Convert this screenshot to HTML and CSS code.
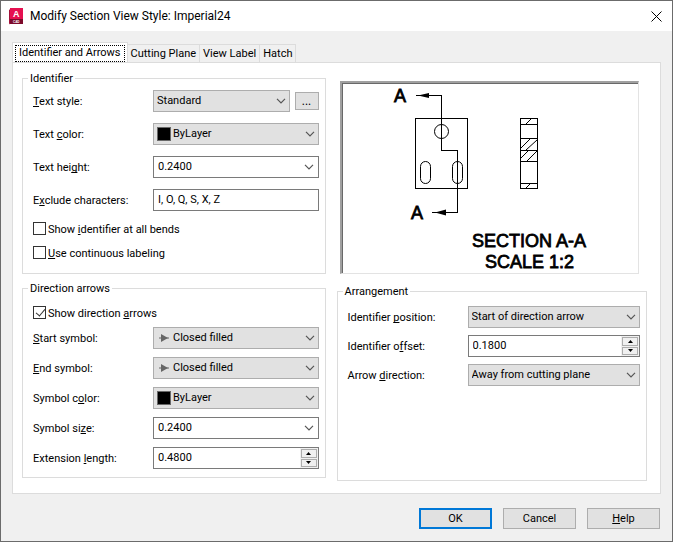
FILE: index.html
```
<!DOCTYPE html>
<html lang="en">
<head>
<meta charset="utf-8">
<meta name="viewport" content="width=device-width, initial-scale=1.0">
<title>Modify Section View Style: Imperial24</title>
<link rel="stylesheet" href="styles.css">
</head>
<body>
<svg class="defs" width="0" height="0" aria-hidden="true">
  <symbol id="chevron" viewBox="0 0 10 6"><path d="M1 .8l4 4 4-4" fill="none" stroke="#555" stroke-width="1.2"/></symbol>
  <symbol id="arrow" viewBox="0 0 10 8"><path d="M0 4h10" stroke="#666"/><path d="M2 0l7 4-7 4z" fill="#666"/></symbol>
  <symbol id="up" viewBox="0 0 5 3"><path d="M0 3l2.5-3L5 3z"/></symbol>
  <symbol id="down" viewBox="0 0 5 3"><path d="M0 0l2.5 3L5 0z"/></symbol>
</svg>

<form class="dialog">
  <header class="titlebar">
    <svg class="logo" viewBox="0 0 15 17" aria-hidden="true">
      <path d="M0 2l2-1.500v14l-2 2z" fill="#a3123a"/>
      <path d="M1 0h13v11H1z" fill="#e51050"/>
      <path d="M1 11h13v5H1z" fill="#7d0a2b"/>
      <text x="4" y="9" font-size="9" font-weight="bold" fill="#fff">A</text>
      <text x="4" y="15" font-size="3" font-weight="bold" fill="#fff">CAD</text>
    </svg>
    <h1>Modify Section View Style: Imperial24</h1>
    <button type="button" class="close" aria-label="Close"><svg viewBox="0 0 11 11"><path d="M.5.500l10 10M10.500.500l-10 10" stroke="#000" fill="none"/></svg></button>
  </header>

  <div class="content">
    <div class="tabs" role="tablist">
      <button type="button" class="tab active" role="tab" aria-selected="true"><span>Identifier and Arrows</span></button>
      <button type="button" class="tab" role="tab">Cutting Plane</button>
      <button type="button" class="tab" role="tab">View Label</button>
      <button type="button" class="tab" role="tab">Hatch</button>
    </div>

    <div class="panel">
      <div class="column">
        <fieldset class="group identifier">
          <legend>Identifier</legend>
          <div class="row">
            <label for="text-style"><u>T</u>ext style:</label>
            <div class="field">
              <div class="select">
                <select id="text-style"><option>Standard</option></select>
                <svg class="chevron"><use href="#chevron"/></svg>
              </div>
              <button type="button" class="more">...</button>
            </div>
          </div>
          <div class="row">
            <label for="text-color">Text <u>c</u>olor:</label>
            <div class="select with-icon">
              <select id="text-color"><option>ByLayer</option></select>
              <span class="swatch"></span>
              <svg class="chevron"><use href="#chevron"/></svg>
            </div>
          </div>
          <div class="row">
            <label for="text-height">Text hei<u>g</u>ht:</label>
            <div class="box">
              <input type="text" id="text-height" value="0.2400">
              <button type="button" class="drop" aria-label="Text height list"><svg><use href="#chevron"/></svg></button>
            </div>
          </div>
          <div class="row">
            <label for="exclude">E<u>x</u>clude characters:</label>
            <div class="box"><input type="text" id="exclude" value="I, O, Q, S, X, Z"></div>
          </div>
          <label class="check"><input type="checkbox"><span>Show <u>i</u>dentifier at all bends</span></label>
          <label class="check"><input type="checkbox"><span><u>U</u>se continuous labeling</span></label>
        </fieldset>

        <fieldset class="group direction">
          <legend>Direction arrows</legend>
          <label class="check"><input type="checkbox" checked><span>Show direction <u>a</u>rrows</span></label>
          <div class="row">
            <label for="start-symbol"><u>S</u>tart symbol:</label>
            <div class="select with-icon">
              <select id="start-symbol"><option>Closed filled</option></select>
              <svg class="arrow"><use href="#arrow"/></svg>
              <svg class="chevron"><use href="#chevron"/></svg>
            </div>
          </div>
          <div class="row">
            <label for="end-symbol"><u>E</u>nd symbol:</label>
            <div class="select with-icon">
              <select id="end-symbol"><option>Closed filled</option></select>
              <svg class="arrow"><use href="#arrow"/></svg>
              <svg class="chevron"><use href="#chevron"/></svg>
            </div>
          </div>
          <div class="row">
            <label for="symbol-color">Symbol c<u>o</u>lor:</label>
            <div class="select with-icon">
              <select id="symbol-color"><option>ByLayer</option></select>
              <span class="swatch"></span>
              <svg class="chevron"><use href="#chevron"/></svg>
            </div>
          </div>
          <div class="row">
            <label for="symbol-size">Symbol si<u>z</u>e:</label>
            <div class="box">
              <input type="text" id="symbol-size" value="0.2400">
              <button type="button" class="drop" aria-label="Symbol size list"><svg><use href="#chevron"/></svg></button>
            </div>
          </div>
          <div class="row">
            <label for="extension">Extension <u>l</u>ength:</label>
            <div class="box">
              <input type="text" id="extension" value="0.4800">
              <div class="spin">
                <button type="button" aria-label="Increase"><svg><use href="#up"/></svg></button>
                <button type="button" aria-label="Decrease"><svg><use href="#down"/></svg></button>
              </div>
            </div>
          </div>
        </fieldset>
      </div>

      <div class="column">
        <div class="preview">
          <svg viewBox="0 0 295 189" role="img" aria-label="Section view preview">
            <g fill="none" stroke="#000" shape-rendering="crispEdges">
              <rect x="73.5" y="35.5" width="52" height="70"/>
              <path d="M74 12.500h25.500v55h16v62H90"/>
              <rect x="178.5" y="35.5" width="17" height="70"/>
              <path d="M178 41.500h18M178 55.500h18M178 67.500h18M178 78.500h18M178 100.500h18"/>
            </g>
            <g fill="none" stroke="#000">
              <circle cx="99.5" cy="48.5" r="7"/>
              <rect x="78.5" y="78.5" width="10" height="22" rx="5"/>
              <rect x="110.5" y="78.5" width="10" height="22" rx="5"/>
              <path d="M184 41l5-5M179 65l9-9M184 67l11-10M179 75l8-8M185 78l10-10M184 105l5-5"/>
            </g>
            <path d="M76 12.500l11-2.500v5zM93 129.500l11-3v6z"/>
            <g class="caption">
              <text x="52" y="19">A</text>
              <text x="69" y="136">A</text>
              <text x="130" y="164">SECTION A-A</text>
              <text x="143" y="185">SCALE 1:2</text>
            </g>
          </svg>
        </div>

        <fieldset class="group arrangement">
          <legend>Arrangement</legend>
          <div class="row">
            <label for="position">Identifier <u>p</u>osition:</label>
            <div class="select">
              <select id="position"><option>Start of direction arrow</option></select>
              <svg class="chevron"><use href="#chevron"/></svg>
            </div>
          </div>
          <div class="row">
            <label for="offset">Identifier o<u>f</u>fset:</label>
            <div class="box">
              <input type="text" id="offset" value="0.1800">
              <div class="spin">
                <button type="button" aria-label="Increase"><svg><use href="#up"/></svg></button>
                <button type="button" aria-label="Decrease"><svg><use href="#down"/></svg></button>
              </div>
            </div>
          </div>
          <div class="row">
            <label for="arrow-direction">Arrow <u>d</u>irection:</label>
            <div class="select">
              <select id="arrow-direction"><option>Away from cutting plane</option></select>
              <svg class="chevron"><use href="#chevron"/></svg>
            </div>
          </div>
        </fieldset>
      </div>
    </div>

    <footer class="actions">
      <button type="submit" class="btn default">OK</button>
      <button type="button" class="btn">Cancel</button>
      <button type="button" class="btn"><u>H</u>elp</button>
    </footer>
  </div>
</form>
</body>
</html>
```
FILE: styles.css
```
* { box-sizing: border-box; }
body { margin: 0; background: #f0f0f0; color: #000; font: 11px/14px Roboto, "Open Sans", sans-serif; }
button, input, select { font: inherit; color: inherit; margin: 0; padding: 0; border-radius: 0; }
u { text-decoration-skip-ink: none; text-underline-offset: 1px; text-decoration-thickness: 1px; }
svg { display: block; }
.defs { position: absolute; }

.dialog { min-height: 100vh; display: flex; flex-direction: column; border: 1px solid #6b6b6b; }
.titlebar { display: flex; align-items: center; height: 30px; padding: 0 10px 0 8px; background: #fff; }
.logo { width: 15px; height: 17px; font-family: "Liberation Sans", sans-serif; }
.titlebar h1 { flex: 1; margin: 0 0 0 6px; font-size: 12px; font-weight: normal; }
.close { border: none; background: none; }
.close svg { width: 11px; height: 11px; }

.content { flex: 1; display: flex; flex-direction: column; padding: 11px 11px 12px; }
.tabs { display: flex; align-items: flex-end; }
.tab { height: 18px; padding: 0 3px; border: 1px solid #dcdcdc; border-width: 1px 1px 0 0; background: #f0f0f0; }
.tab.active { height: 21px; margin-bottom: -1px; padding: 2px; border-left-width: 1px; background: #fff; }
.tab.active span { display: block; padding: 0 3px 2px; border: 1px dotted #000; line-height: 13px; }

.panel { flex: 1; display: flex; gap: 11px; padding: 8px 13px 12px 9px; border: 1px solid #dcdcdc; background: #fff; }
.column { display: flex; flex-direction: column; flex: 304; gap: 7px; min-width: 0; }
.column + .column { flex: 311; gap: 10px; }

.group { display: flex; flex-direction: column; min-width: 0; margin: 0; padding: 5px 6px 14px 10px; border: 1px solid #dcdcdc; }
.group legend { margin-left: -5px; padding: 2px 2px 0; line-height: 12px; }
.identifier { gap: 11px; }
.direction { gap: 8px; padding-top: 11px; padding-bottom: 8px; }
.arrangement { flex: 1; gap: 7px; padding-top: 8px; }

.row { display: grid; grid-template-columns: 120px minmax(0, 1fr); align-items: center; }
.row label, .check span { padding-top: 2px; }
.field { display: flex; align-items: center; gap: 5px; }
.field .select { flex: 1; }

.select { position: relative; }
.select select { display: block; width: 100%; height: 22px; padding: 0 20px 0 3px; border: 1px solid #adadad; background: #e1e1e1; appearance: none; }
.select.with-icon select { padding-left: 19px; }
.chevron { position: absolute; top: 8px; right: 4px; width: 10px; height: 6px; pointer-events: none; }
.swatch { position: absolute; top: 4px; left: 4px; width: 14px; height: 14px; border: 1px solid #696969; background: #000; pointer-events: none; }
.arrow { position: absolute; top: 7px; left: 6px; width: 10px; height: 8px; pointer-events: none; }
.more { width: 24px; height: 18px; border: 1px solid #adadad; background: #e1e1e1; font-size: 12px; line-height: 12px; }

.box { display: flex; height: 22px; border: 1px solid #7a7a7a; background: #fff; }
.box input { flex: 1; min-width: 0; padding: 0 4px; border: none; background: none; outline: none; }
.drop { padding: 0 4px; border: none; background: none; }
.drop svg { width: 10px; height: 6px; }
.spin { display: flex; flex-direction: column; gap: 1px; width: 18px; padding: 1px; background: #f0f0f0; }
.spin button { flex: 1; display: flex; align-items: center; justify-content: center; border: 1px solid #adadad; background: #f0f0f0; }
.spin svg { width: 5px; height: 3px; }

.check { display: flex; align-items: center; gap: 2px; height: 13px; }
.check input { appearance: none; width: 13px; height: 13px; border: 1px solid #333; background: #fff; }
.check input:checked::after { content: ""; display: block; width: 4px; height: 8px; margin-left: 4px; border: solid #333; border-width: 0 1px 1px 0; transform: rotate(40deg); }

.preview { height: 193px; margin: 10px 8px 0 3px; border: solid #e3e3e3; border-width: 2px 1px 1px 2px; border-color: #a0a0a0 #e3e3e3 #e3e3e3 #a0a0a0; box-shadow: inset 1px 1px #696969; }
.preview svg { width: 295px; height: 189px; }
.caption { font: 18px "Liberation Sans", sans-serif; stroke: #000; stroke-width: .8px; }

.actions { display: flex; justify-content: flex-end; gap: 11px; padding: 14px 1px 0 0; }
.btn { width: 73px; height: 21px; padding-top: 1px; border: 1px solid #adadad; background: #e1e1e1; }
.btn.default { border: 2px solid #0078d7; }
```
